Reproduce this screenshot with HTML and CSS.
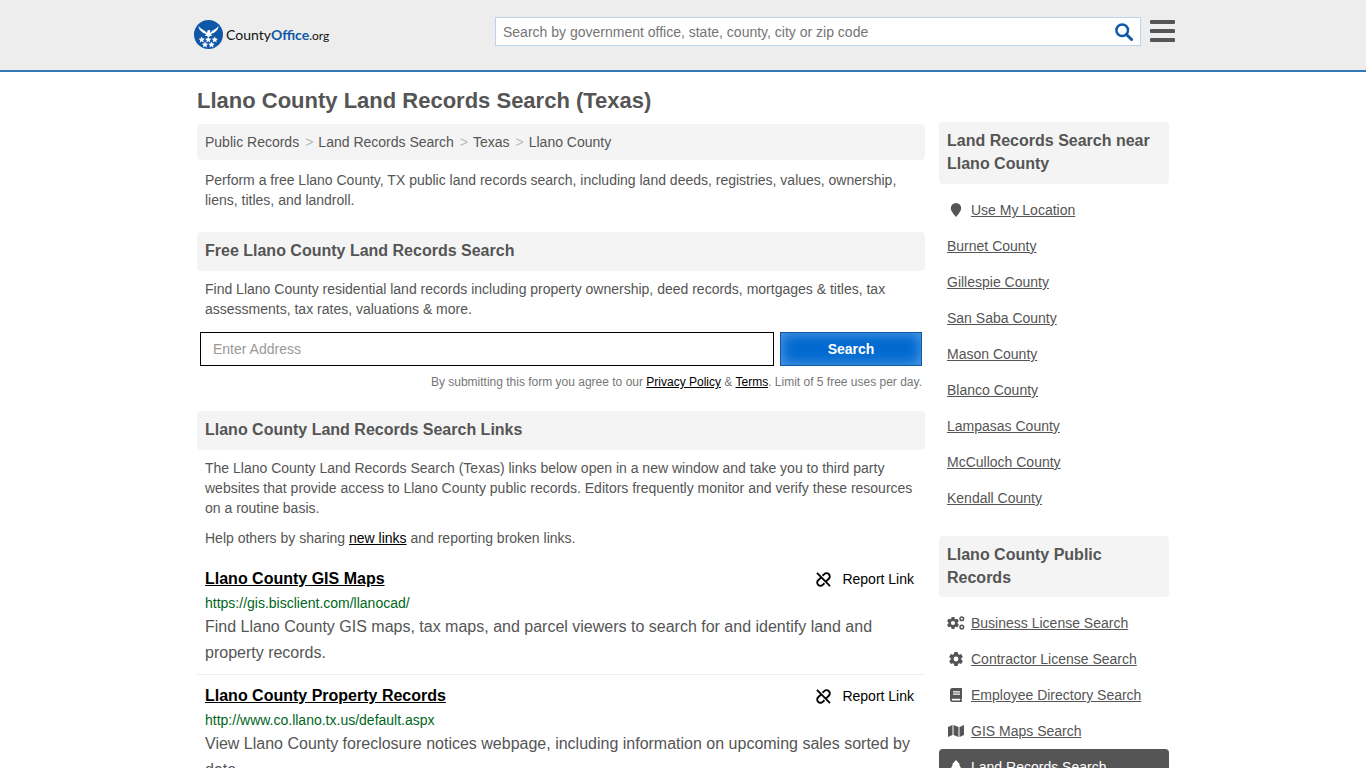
FILE: index.html
```html
<!DOCTYPE html>
<html lang="en">
<head>
    <meta charset="UTF-8">
    <meta name="viewport" content="width=device-width, initial-scale=1.0">
    <title>Llano County Land Records Search (Texas)</title>
    <link rel="stylesheet" href="styles.css">
</head>
<body>
    <!-- shared icon shapes -->
    <svg class="sprite" aria-hidden="true">
        <symbol id="gear" viewBox="43 16 426 426">
            <path fill-rule="evenodd" d="M206 16h100l14 62 34 20 61-19 50 87-47 43v40l47 43-50 87-61-19-34 20-14 62H206l-14-62-34-20-61 19-50-87 47-43v-40l-47-43 50-87 61 19 34-20zM256 155a74 74 0 1 0 0 148 74 74 0 0 0 0-148z"/>
        </symbol>
        <symbol id="broken-link" viewBox="0 0 16 16">
            <path fill="none" stroke="currentColor" stroke-width="2" d="M1 1l14 14M7 4l1.800-1.700a3.300 3.300 0 0 1 4.900 4.900L11 9.800M5 6.200L2.300 8.800a3.300 3.300 0 0 0 4.900 4.900L9 12"/>
        </symbol>
    </svg>

    <header class="site-header">
        <div class="header-inner">
            <a href="#" class="logo">
                <svg class="logo-mark" viewBox="0 0 58 58" aria-hidden="true">
                    <circle cx="29" cy="29" r="29" fill="#0f58a8"/>
                    <g fill="#fff">
                        <path d="M9 12c4 5 9 7 13 10l4 4 1-5 3-1 3 1-1 2 1 3 3-4c4-3 9-5 13-10 0 5-3 9-7 12-2 2-5 3-8 4l2 4h-4l-3 3-3-3h-4l2-4c-3-1-6-2-8-4-4-3-7-7-7-12z"/>
                        <path id="star" d="M15.500 33l1.900 4 4.400.5-3.200 3 .8 4.300-3.900-2.100-3.900 2.100.8-4.300-3.200-3 4.400-.5z"/>
                        <use href="#star" x="13"/>
                        <use href="#star" x="26"/>
                        <use href="#star" x="6.500" y="10"/>
                        <use href="#star" x="19.500" y="10"/>
                    </g>
                </svg>
                <span class="logo-text">County<b>Office</b><span class="logo-org">.org</span></span>
            </a>
            <form class="site-search">
                <input type="text" aria-label="Search site" placeholder="Search by government office, state, county, city or zip code">
                <button type="button" aria-label="Search">
                    <svg viewBox="0 0 18 18"><circle cx="7.200" cy="7.200" r="5.800" fill="none" stroke="#0f58a8" stroke-width="2.500"/><path d="M11.500 11.500l5 5" stroke="#0f58a8" stroke-width="3" stroke-linecap="round"/></svg>
                </button>
            </form>
            <button type="button" class="menu-btn" aria-label="Menu"><span></span><span></span><span></span></button>
        </div>
    </header>

    <div class="container">
        <main class="main">
            <h1>Llano County Land Records Search (Texas)</h1>
            <nav class="breadcrumb" aria-label="Breadcrumb">
                <a href="#">Public Records</a>
                <span>&gt;</span>
                <a href="#">Land Records Search</a>
                <span>&gt;</span>
                <a href="#">Texas</a>
                <span>&gt;</span>
                <a href="#">Llano County</a>
            </nav>
            <p>Perform a free Llano County, TX public land records search, including land deeds, registries, values, ownership, liens, titles, and landroll.</p>

            <h2>Free Llano County Land Records Search</h2>
            <p>Find Llano County residential land records including property ownership, deed records, mortgages &amp; titles, tax assessments, tax rates, valuations &amp; more.</p>
            <form class="address-form">
                <input type="text" aria-label="Address" placeholder="Enter Address">
                <button type="button">Search</button>
            </form>
            <div class="form-note">By submitting this form you agree to our <a href="#">Privacy Policy</a> &amp; <a href="#">Terms</a>. Limit of 5 free uses per day.</div>

            <h2>Llano County Land Records Search Links</h2>
            <p>The Llano County Land Records Search (Texas) links below open in a new window and take you to third party websites that provide access to Llano County public records. Editors frequently monitor and verify these resources on a routine basis.</p>
            <p>Help others by sharing <a href="#">new links</a> and reporting broken links.</p>

            <div class="listing">
                <div class="listing-head">
                    <a href="#" class="listing-title">Llano County GIS Maps</a>
                    <a href="#" class="report"><svg aria-hidden="true"><use href="#broken-link"/></svg>Report Link</a>
                </div>
                <div class="listing-url">https://gis.bisclient.com/llanocad/</div>
                <div class="listing-desc">Find Llano County GIS maps, tax maps, and parcel viewers to search for and identify land and property records.</div>
            </div>
            <div class="listing">
                <div class="listing-head">
                    <a href="#" class="listing-title">Llano County Property Records</a>
                    <a href="#" class="report"><svg aria-hidden="true"><use href="#broken-link"/></svg>Report Link</a>
                </div>
                <div class="listing-url">http://www.co.llano.tx.us/default.aspx</div>
                <div class="listing-desc">View Llano County foreclosure notices webpage, including information on upcoming sales sorted by date.</div>
            </div>
        </main>

        <aside class="sidebar">
            <h2>Land Records Search near Llano County</h2>
            <ul>
                <li><svg viewBox="0 0 18 14" aria-hidden="true"><path d="M9 0a5.200 5.200 0 0 1 5.200 5.200C14.200 8 11 11.500 9 14 7 11.500 3.800 8 3.800 5.200A5.200 5.200 0 0 1 9 0z"/></svg><a href="#">Use My Location</a></li>
                <li><a href="#">Burnet County</a></li>
                <li><a href="#">Gillespie County</a></li>
                <li><a href="#">San Saba County</a></li>
                <li><a href="#">Mason County</a></li>
                <li><a href="#">Blanco County</a></li>
                <li><a href="#">Lampasas County</a></li>
                <li><a href="#">McCulloch County</a></li>
                <li><a href="#">Kendall County</a></li>
            </ul>

            <h2>Llano County Public Records</h2>
            <ul>
                <li><svg viewBox="0 0 18 14" aria-hidden="true"><use href="#gear" x="0" y="1" width="12" height="12"/><g fill="none" stroke="currentColor" stroke-width="1.500"><circle cx="14.800" cy="2.800" r="1.800"/><circle cx="14.800" cy="11" r="1.800"/></g></svg><a href="#">Business License Search</a></li>
                <li><svg viewBox="0 0 18 14" aria-hidden="true"><use href="#gear" x="2" y="0" width="14" height="14"/></svg><a href="#">Contractor License Search</a></li>
                <li><svg viewBox="0 0 18 14" aria-hidden="true"><path fill-rule="evenodd" d="M5.500 0H15v10.500l-.6.500v1.500h.6V14H5.500A2.500 2.500 0 0 1 3 11.500v-9A2.500 2.500 0 0 1 5.500 0zM6 3.200v1.200h7V3.200zM6 5.600v1.200h7V5.600zM5.500 10.800a.8.8 0 0 0 0 1.600H13v-1.600z"/></svg><a href="#">Employee Directory Search</a></li>
                <li><svg viewBox="0 0 18 14" aria-hidden="true"><path d="M1 3l4.500-2v10L1 13zM6.500 1l5 2v10l-5-2zM12.500 3L17 1v10l-4.500 2z"/></svg><a href="#">GIS Maps Search</a></li>
                <li class="active"><svg viewBox="0 0 18 14" aria-hidden="true"><path d="M9 0l4 4.500h-1L14 8h-1l2.500 3.500H10V14H8v-2.500H2.500L5 8H4l2-3.500H5z"/></svg><a href="#">Land Records Search</a></li>
            </ul>
        </aside>
    </div>
</body>
</html>
```
FILE: styles.css
```css
* { box-sizing: border-box; }
body { margin: 0; background: #fff; color: #555; font-family: "Liberation Sans", Arial, sans-serif; font-size: 14px; line-height: 20px; }
input, button { font-family: inherit; font-size: 14px; }
button { cursor: pointer; }
ul { list-style: none; margin: 0; padding: 0; }
.sprite { display: none; }

.site-header { background: #ededed; border-bottom: 2px solid #337ab7; }
.header-inner { display: flex; align-items: flex-start; max-width: 984px; height: 70px; margin: 0 auto; padding: 16px 0 0 3px; }
.logo { display: flex; align-items: center; gap: 3px; margin-top: 4px; color: #111; text-decoration: none; }
.logo-mark { width: 29px; height: 29px; }
.logo-text { padding-top: 2px; font-family: Lato, sans-serif; font-size: 14px; }
.logo-text b { color: #0f58a8; }
.logo-org { font-size: 12px; }
.site-search { display: flex; width: 646px; height: 29px; margin: 1px 9px 0 auto; background: #fff; border: 1px solid #bcd3ea; }
.site-search input { flex: 1; padding: 0 7px; border: 0; background: none; color: #555; outline: 0; }
.site-search input::placeholder { color: #757575; }
.site-search button { width: 32px; padding: 0; border: 0; background: none; }
.site-search svg { display: block; width: 18px; height: 18px; margin: 0 auto; }
.menu-btn { display: flex; flex-direction: column; gap: 5px; margin-top: 4px; padding: 0; border: 0; background: none; }
.menu-btn span { width: 25px; height: 4px; background: #555; border-radius: 1px; }

.container { display: flex; gap: 14px; max-width: 972px; margin: 0 auto; }
.main { flex: 1; min-width: 0; }
h1 { margin: 15px 0 9px; font-size: 22px; line-height: 28px; }
h2 { margin: 0; padding: 7px 8px 9px; background: #f4f4f4; border-radius: 4px; font-size: 16px; line-height: 23px; }
.main h2 { margin-top: 22px; }
.main .form-note + h2 { margin-top: 19px; }
.breadcrumb { display: flex; gap: 5px; padding: 8px; background: #f4f4f4; border-radius: 4px; }
.breadcrumb a { color: #555; text-decoration: none; }
.breadcrumb span { padding-left: 1px; color: #bbb; }
p { margin: 10px 8px 0; }
.main h2 + p { margin-top: 8px; }
p a, .form-note a { color: #000; }

.address-form { display: flex; gap: 6px; margin: 13px 3px 0; }
.address-form input { flex: 1; height: 34px; padding: 0 12px; border: 1px solid #000; }
.address-form input::placeholder { color: #999; }
.address-form button { width: 142px; border: 1px solid #0f58a8; background: #0069d0; box-shadow: inset 0 0 14px #5fa3e4; color: #fff; font-weight: bold; }
.form-note { margin: 6px 3px 0; color: #777; font-size: 12px; text-align: right; }

.listing { padding: 10px 8px 8px; border-bottom: 1px solid #eee; }
.listing + .listing { padding-top: 11px; }
p + .listing { margin-top: 11px; }
.listing-head { display: flex; justify-content: space-between; align-items: center; padding-right: 3px; }
.listing-title { color: #000; font-size: 16px; font-weight: bold; }
.report { display: flex; align-items: center; gap: 11px; color: #000; text-decoration: none; }
.report svg { width: 15px; height: 15px; }
.listing-url { margin: 4px 0 1px; color: #006621; }
.listing-desc { font-size: 16px; line-height: 26px; }

.sidebar { width: 230px; padding-top: 50px; }
.sidebar ul { padding: 8px 0 20px; }
.sidebar ul + h2 { padding-bottom: 8px; }
.sidebar li { display: flex; align-items: center; gap: 6px; padding: 8px; }
.sidebar li svg { width: 18px; height: 14px; fill: currentColor; }
.sidebar li a { color: inherit; }
.sidebar .active { background: #555; border-radius: 4px; color: #fff; }
.sidebar .active a { text-decoration: none; }
```
